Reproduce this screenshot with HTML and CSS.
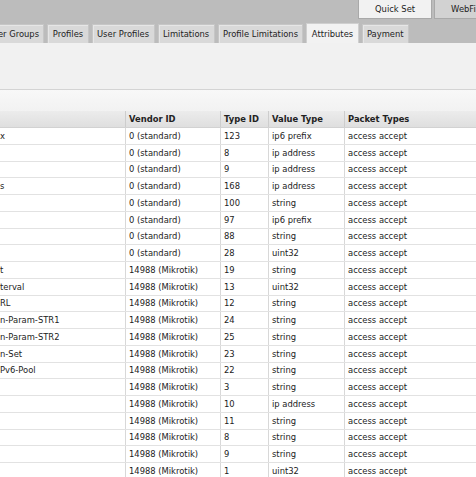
FILE: index.html
```html
<!DOCTYPE html>
<html>
<head>
<meta charset="utf-8">
<link rel="stylesheet" href="styles.css">
</head>
<body>
<div class="top">
  <div class="buttons">
    <div class="btn btn-active">Quick Set</div>
    <div class="btn">WebFig</div>
  </div>
  <div class="tabs">
    <div class="tab tab-first">User Groups</div>
    <div class="tab">Profiles</div>
    <div class="tab">User Profiles</div>
    <div class="tab">Limitations</div>
    <div class="tab">Profile Limitations</div>
    <div class="tab tab-active">Attributes</div>
    <div class="tab">Payment</div>
  </div>
</div>
<div class="panel"></div>
<div class="band"></div>
<div class="grid">
  <div class="row head"><div class="c c1"></div><div class="c">Vendor ID</div><div class="c">Type ID</div><div class="c">Value Type</div><div class="c">Packet Types</div></div>
  <div class="row"><div class="c c1">x</div><div class="c">0 (standard)</div><div class="c">123</div><div class="c">ip6 prefix</div><div class="c">access accept</div></div>
  <div class="row"><div class="c c1"></div><div class="c">0 (standard)</div><div class="c">8</div><div class="c">ip address</div><div class="c">access accept</div></div>
  <div class="row"><div class="c c1"></div><div class="c">0 (standard)</div><div class="c">9</div><div class="c">ip address</div><div class="c">access accept</div></div>
  <div class="row"><div class="c c1">s</div><div class="c">0 (standard)</div><div class="c">168</div><div class="c">ip address</div><div class="c">access accept</div></div>
  <div class="row"><div class="c c1"></div><div class="c">0 (standard)</div><div class="c">100</div><div class="c">string</div><div class="c">access accept</div></div>
  <div class="row"><div class="c c1"></div><div class="c">0 (standard)</div><div class="c">97</div><div class="c">ip6 prefix</div><div class="c">access accept</div></div>
  <div class="row"><div class="c c1"></div><div class="c">0 (standard)</div><div class="c">88</div><div class="c">string</div><div class="c">access accept</div></div>
  <div class="row"><div class="c c1"></div><div class="c">0 (standard)</div><div class="c">28</div><div class="c">uint32</div><div class="c">access accept</div></div>
  <div class="row"><div class="c c1">t</div><div class="c">14988 (Mikrotik)</div><div class="c">19</div><div class="c">string</div><div class="c">access accept</div></div>
  <div class="row"><div class="c c1">terval</div><div class="c">14988 (Mikrotik)</div><div class="c">13</div><div class="c">uint32</div><div class="c">access accept</div></div>
  <div class="row"><div class="c c1">RL</div><div class="c">14988 (Mikrotik)</div><div class="c">12</div><div class="c">string</div><div class="c">access accept</div></div>
  <div class="row"><div class="c c1">n-Param-STR1</div><div class="c">14988 (Mikrotik)</div><div class="c">24</div><div class="c">string</div><div class="c">access accept</div></div>
  <div class="row"><div class="c c1">n-Param-STR2</div><div class="c">14988 (Mikrotik)</div><div class="c">25</div><div class="c">string</div><div class="c">access accept</div></div>
  <div class="row"><div class="c c1">n-Set</div><div class="c">14988 (Mikrotik)</div><div class="c">23</div><div class="c">string</div><div class="c">access accept</div></div>
  <div class="row"><div class="c c1">Pv6-Pool</div><div class="c">14988 (Mikrotik)</div><div class="c">22</div><div class="c">string</div><div class="c">access accept</div></div>
  <div class="row"><div class="c c1"></div><div class="c">14988 (Mikrotik)</div><div class="c">3</div><div class="c">string</div><div class="c">access accept</div></div>
  <div class="row"><div class="c c1"></div><div class="c">14988 (Mikrotik)</div><div class="c">10</div><div class="c">ip address</div><div class="c">access accept</div></div>
  <div class="row"><div class="c c1"></div><div class="c">14988 (Mikrotik)</div><div class="c">11</div><div class="c">string</div><div class="c">access accept</div></div>
  <div class="row"><div class="c c1"></div><div class="c">14988 (Mikrotik)</div><div class="c">8</div><div class="c">string</div><div class="c">access accept</div></div>
  <div class="row"><div class="c c1"></div><div class="c">14988 (Mikrotik)</div><div class="c">9</div><div class="c">string</div><div class="c">access accept</div></div>
  <div class="row"><div class="c c1"></div><div class="c">14988 (Mikrotik)</div><div class="c">1</div><div class="c">uint32</div><div class="c">access accept</div></div>
</div>
</body>
</html>
```
FILE: styles.css
```css
html, body {
  margin: 0;
  padding: 0;
}
body {
  font-family: "DejaVu Sans", Verdana, sans-serif;
  font-size: 8.4px;
  color: #222;
  background: #fff;
  width: 476px;
  height: 477px;
  overflow: hidden;
}
.top {
  background: #bcbcbc;
  height: 43px;
  display: flex;
  flex-direction: column;
  overflow: hidden;
}
.buttons {
  display: flex;
  gap: 2px;
  padding-left: 358px;
  height: 19px;
  overflow: hidden;
}
.btn {
  flex: 0 0 auto;
  box-sizing: border-box;
  height: 19px;
  padding: 0 16px;
  display: flex;
  align-items: center;
  background: #d2d2d2;
  border: 1px solid #a9a9a9;
  border-top: 0;
  white-space: nowrap;
}
.btn-active {
  background: #f2f2f2;
}
.tabs {
  display: flex;
  gap: 3px;
  margin-top: 5px;
  height: 19px;
  align-items: flex-end;
}
.tab {
  flex: 0 0 auto;
  box-sizing: border-box;
  height: 19px;
  padding: 0 4.4px;
  display: flex;
  align-items: center;
  background: #d9d9d9;
  border: 1px solid #c6c6c6;
  border-bottom: 0;
  box-shadow: inset 1px 1px 0 #e6e6e6;
  white-space: nowrap;
}
.tab-first {
  margin-left: -18px;
}
.tab-active {
  height: 20px;
  background: #f2f2f2;
  border-color: #cfcfcf;
  box-shadow: none;
}
.panel {
  height: 46px;
  background: #f1f1f1;
  border-bottom: 1px solid #d4d4d4;
}
.band {
  height: 21px;
  background: linear-gradient(#f8f8f8, #f2f2f2);
}
.grid {
  display: flex;
  flex-direction: column;
}
.row {
  display: grid;
  grid-template-columns: 125px 95px 48px 76px 1fr;
  box-sizing: border-box;
  height: 16.75px;
  border-bottom: 1px solid #e2e2e2;
  background: #fff;
}
.row.head {
  height: 17px;
  background: linear-gradient(#ececec, #dfdfdf);
  border-bottom: 1px solid #d2d2d2;
  font-weight: bold;
}
.c {
  box-sizing: border-box;
  border-left: 1px solid #d8d8d8;
  padding-left: 3px;
  display: flex;
  align-items: center;
  white-space: nowrap;
  overflow: hidden;
}
.c1 {
  border-left: 0;
  padding-left: 0;
}
.head .c {
  border-left-color: #cdcdcd;
}
.head .c1 {
  border-left: 0;
}
```
